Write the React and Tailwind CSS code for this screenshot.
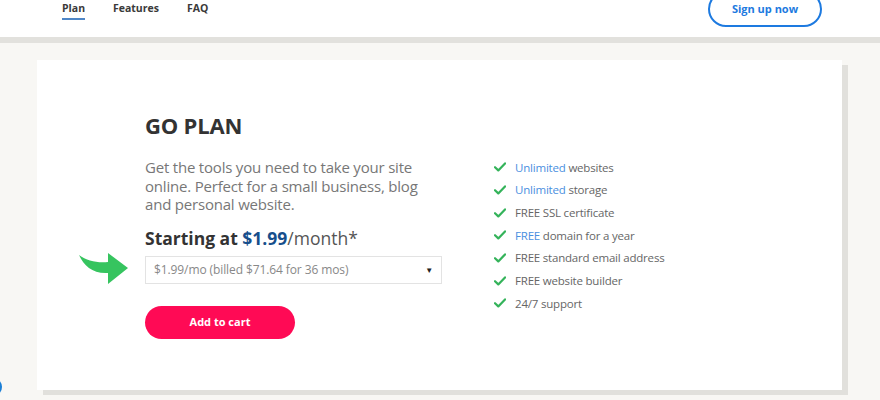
import React from "react";

const font = { fontFamily: '"Open Sans", "Noto Sans", sans-serif' };

function Check() {
  return (
    <svg width="12" height="10" viewBox="0 0 12 10" className="shrink-0">
      <path d="M1 5.2 L4.3 8.4 L11 1.4" fill="none" stroke="#34b35a" strokeWidth="2.2" strokeLinecap="round" strokeLinejoin="round" />
    </svg>
  );
}

function Feature({ blue, rest }) {
  return (
    <li className="flex items-center gap-[9px] h-[22.7px]">
      <Check />
      <span className="text-[11.5px] tracking-[-0.2px] text-[#666]">
        {blue ? <span className="text-[#4a8fe0]">{blue}</span> : null}
        {rest}
      </span>
    </li>
  );
}

export default function App() {
  return (
    <div className="relative w-[880px] h-[400px] overflow-hidden bg-[#f8f7f4]" style={font}>
      <header className="h-[56px] -mt-[19px] bg-white flex items-center">
        <nav className="flex items-center ml-[62px] text-[10.5px] font-bold text-[#3a3a3a]">
          <span className="w-[51px]">
            <span className="relative">
              Plan
              <span className="absolute left-0 right-0 -bottom-[5px] h-[2px] bg-[#4f86c6]" />
            </span>
          </span>
          <span className="w-[74px]">Features</span>
          <span>FAQ</span>
        </nav>
        <button className="ml-auto mr-[58px] w-[114px] h-[36px] rounded-full border-2 border-[#1d7ae0] text-[#1d7ae0] text-[11px] font-bold bg-white">
          Sign up now
        </button>
      </header>
      <div className="h-[6px] bg-[#e2e1dd]" />
      <div className="pt-[17px] pl-[37px]">
        <div className="w-[805px] h-[330px] bg-white shadow-[6px_5px_0_0_#e1e0dc] flex">
          <div className="pl-[108px] pt-[52px] w-[450px] shrink-0">
            <h1 className="text-[22px] font-bold text-[#333] leading-[26px] tracking-[-0.2px]">GO PLAN</h1>
            <p className="mt-[20px] text-[15px] leading-[18.5px] tracking-[-0.2px] text-[#777] w-[300px]">
              Get the tools you need to take your site online. Perfect for a small business, blog and personal website.
            </p>
            <p className="mt-[13px] text-[17.5px] leading-[22px] text-[#555]">
              <span className="font-bold text-[#333]">Starting at </span>
              <span className="font-bold text-[#174f8c]">$1.99</span>
              <span>/month*</span>
            </p>
            <div className="relative mt-[7px]">
              <svg className="absolute -left-[66px] -top-[4px]" width="50" height="34" viewBox="0 0 50 34">
                <path d="M0 3 C5 14 14 22 29 21 L29 32 L49 16 L29 1 L29 10 C18 11 8 9 0 3 Z" fill="#36c45f" />
              </svg>
              <div className="w-[297px] h-[28px] border border-[#e3e3e3] flex items-center pl-[8px] pr-[8px] text-[12px] tracking-[-0.1px] text-[#888]">
                <span>$1.99/mo (billed $71.64 for 36 mos)</span>
                <span className="ml-auto text-[8px] text-[#222]">▼</span>
              </div>
            </div>
            <button className="mt-[22px] w-[150px] h-[33px] rounded-full bg-[#ff0a55] text-white text-[11px] font-bold">
              Add to cart
            </button>
          </div>
          <div className="pl-[7px] pt-[96px]">
            <ul>
              <Feature blue="Unlimited" rest=" websites" />
              <Feature blue="Unlimited" rest=" storage" />
              <Feature rest="FREE SSL certificate" />
              <Feature blue="FREE" rest=" domain for a year" />
              <Feature rest="FREE standard email address" />
              <Feature rest="FREE website builder" />
              <Feature rest="24/7 support" />
            </ul>
          </div>
        </div>
      </div>
      <div className="absolute -left-[16px] top-[378px] w-[18px] h-[18px] rounded-full bg-[#1b7fd6]" />
    </div>
  );
}
